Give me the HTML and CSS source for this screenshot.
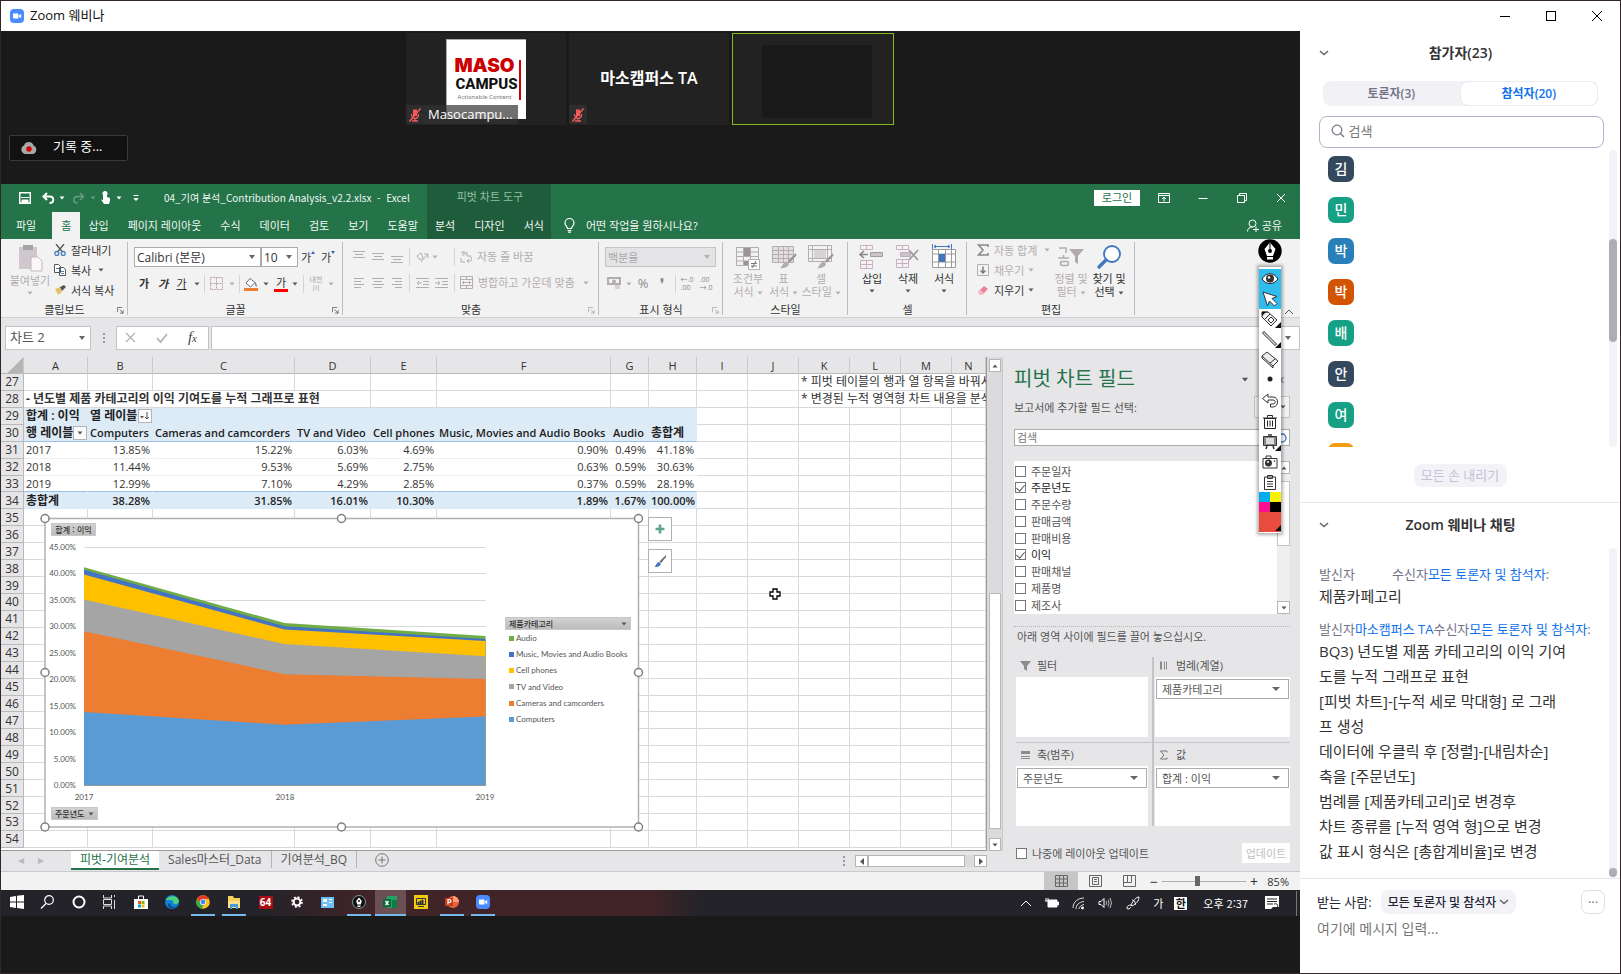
FILE: index.html
```html
<!DOCTYPE html>
<html lang="ko">
<head>
<meta charset="utf-8">
<title>Zoom 웨비나</title>
<link rel="stylesheet" href="styles.css">
</head>
<body>
<svg class="defs" aria-hidden="true">
  <symbol id="tri" viewBox="0 0 6 4"><path d="M0.5 0.5h5L3 3.5z" fill="currentColor"/></symbol>
  <symbol id="launch" viewBox="0 0 8 8"><path d="M0.5 6V0.5H6M3 3l4 4M7 3.5V7H3.5" fill="none" stroke="currentColor"/></symbol>
  <symbol id="chev" viewBox="0 0 10 6"><path d="M1 1l4 3.6L9 1" fill="none" stroke="currentColor" stroke-width="1.5"/></symbol>
  <symbol id="mute" viewBox="0 0 14 14"><path d="M5 1.5h4v6.500H5z" fill="#f25a5a"/><path d="M3.500 6c0 6 7 6 7 0M7 10.500v2.500M4 13h6" fill="none" stroke="#f25a5a" stroke-width="1.400"/><path d="M1.500 13.500L12.500 0.500" stroke="#f25a5a" stroke-width="1.500"/></symbol>
  <symbol id="zoomlogo" viewBox="0 0 14 14"><rect width="14" height="14" rx="4" fill="#4a8cff"/><path d="M3 4.500h4.500a1 1 0 0 1 1 1V9.500H4a1 1 0 0 1-1-1zM9 6.500l2.200-1.600v4.400L9 7.700z" fill="#fff"/></symbol>
  <symbol id="brush" viewBox="0 0 16 16"><path d="M15 1L8 8l1.500 1.500L15.500 3z" fill="#9a9296"/><path d="M7 8.500l2 2c-1 3-4 4-8 4 2-1.500 2.500-5.500 6-6z" fill="#b3abaf"/></symbol>
</svg>
<div class="window">
  <header class="titlebar">
    <svg class="i14"><use href="#zoomlogo"/></svg>
    <h1>Zoom 웨비나</h1>
    <div class="wctl">
      <button aria-label="최소화"><svg width="12" height="12"><path d="M1 6.500h10" stroke="#000"/></svg></button>
      <button aria-label="최대화"><svg width="12" height="12"><rect x="1.500" y="1.500" width="9" height="9" fill="none" stroke="#000"/></svg></button>
      <button aria-label="닫기"><svg width="12" height="12"><path d="M1 1l10 10M11 1L1 11" stroke="#000" fill="none"/></svg></button>
    </div>
  </header>
  <div class="body">
  <main class="stage">
    <section class="videos">
      <div class="tiles">
        <div class="tile">
          <div class="logo"><div class="lt"><b class="l1">MASO</b><b class="l2">CAMPUS</b><span>Actionable Content</span></div><i></i></div>
          <div class="tag wide"><svg class="i14"><use href="#mute"/></svg><span>Masocampu...</span></div>
        </div>
        <div class="tile"><strong>마소캠퍼스 TA</strong><div class="tag"><svg class="i14"><use href="#mute"/></svg></div></div>
        <div class="tile active"><div class="cam"></div></div>
      </div>
      <div class="rec"><svg width="18" height="14"><path d="M5 13a4.500 4.500 0 0 1-1-8.500 5 5 0 0 1 9.500 0A4.500 4.500 0 0 1 13 13z" fill="#a8a8a8"/><circle cx="9" cy="8" r="2.700" fill="#d00000"/></svg><span>기록 중...</span></div>
    </section>

    <section class="excel">
      <header class="xhead">
        <div class="xleft">
          <div class="qat">
            <svg width="12" height="12"><path d="M0.750 0.750h10.500v10.500H0.750z" fill="none" stroke="#fff" stroke-width="1.500"/><path d="M2 5.500h8M3 12V8h6v4z" stroke="#fff" fill="#fff"/></svg>
            <svg width="13" height="12"><path d="M5 1L1.500 4.500 5 8M2 4.500h5.500c5 0 5 6.500 0 6.500" fill="none" stroke="#fff" stroke-width="2"/></svg>
            <svg class="tri"><use href="#tri"/></svg>
            <svg class="dim" width="13" height="12"><path d="M8 1l3.500 3.500L8 8M11 4.500H5.500c-5 0-5 6.500 0 6.500" fill="none" stroke="#fff" stroke-width="1.500"/></svg>
            <svg class="tri dim"><use href="#tri"/></svg>
            <svg width="11" height="13"><path d="M3 4a2.500 2.500 0 1 1 4 0v2l3 1v3l-1 3H4L1 8.500l2 0.500z" fill="#fff"/></svg>
            <svg class="tri"><use href="#tri"/></svg>
            <svg width="6" height="8"><path d="M0.500 1.500h5M1 4.500h4L3 6.500z" stroke="#fff" fill="#fff"/></svg>
          </div>
          <span class="fname">04_기여 분석_Contribution Analysis_v2.2.xlsx &nbsp;- &nbsp;Excel</span>
          <nav class="tabs">
            <a href="#" class="file">파일</a><a href="#" class="on">홈</a><a href="#">삽입</a><a href="#">페이지 레이아웃</a><a href="#">수식</a><a href="#">데이터</a><a href="#">검토</a><a href="#">보기</a><a href="#">도움말</a>
          </nav>
        </div>
        <div class="ctx"><span>피벗 차트 도구</span><nav class="tabs"><a href="#">분석</a><a href="#">디자인</a><a href="#">서식</a></nav></div>
        <div class="tell"><svg width="11" height="15"><path d="M3.500 10.500C3.500 8.500 1 8 1 5a4.500 4.500 0 0 1 9 0c0 3-2.500 3.500-2.500 5.500zM3.500 12.500h4M4 14.200h3" fill="none" stroke="#fff" stroke-width="1.200"/></svg><span>어떤 작업을 원하시나요?</span></div>
        <div class="xright">
          <div class="xctl">
            <button class="login">로그인</button>
            <button aria-label="리본 표시"><svg width="12" height="10"><path d="M0.500 0.500h11v9H0.500zM0.500 2.500h11M6 8.500V4.500M4 6l2-2 2 2" fill="none" stroke="#fff"/></svg></button>
            <button aria-label="최소화"><svg width="10" height="10"><path d="M0.500 5.500h9" stroke="#fff"/></svg></button>
            <button aria-label="복원"><svg width="10" height="10"><path d="M0.500 2.500h7v7h-7zM2.500 2.500v-2h7v7h-2" fill="none" stroke="#fff"/></svg></button>
            <button aria-label="닫기"><svg width="10" height="10"><path d="M1 1l8 8M9 1L1 9" stroke="#fff" fill="none"/></svg></button>
          </div>
          <a href="#" class="share"><svg width="12" height="13"><circle cx="5.500" cy="4.500" r="3.500" fill="none" stroke="#fff"/><path d="M0.500 12.500c0-3 2-4.500 5-4.500M6 10.500h6M9 7.500v5.500" fill="none" stroke="#fff"/></svg>공유</a>
        </div>
      </header>

      <div class="ribbon">
        <section class="grp g-clip">
          <div class="cnt">
            <button class="big off"><svg width="26" height="28"><path d="M2 3h18v22H2z" fill="#cfc8cc"/><path d="M6 1h10v5H6z" fill="#a9a2a6"/><path d="M14 13h7l4 4v10H14z" fill="#fbf6fa" stroke="#c3b9c0"/></svg><span>붙여넣기</span><svg class="tri"><use href="#tri"/></svg></button>
            <div class="stack">
              <button><svg width="12" height="12"><path d="M2 0l6.500 8M10 0L3.500 8" stroke="#555" stroke-width="1.300"/><circle cx="2.800" cy="9.500" r="2" fill="none" stroke="#4a7ebb" stroke-width="1.300"/><circle cx="9.200" cy="9.500" r="2" fill="none" stroke="#4a7ebb" stroke-width="1.300"/></svg>잘라내기</button>
              <button><svg width="12" height="12"><path d="M0.500 0.500h4l2 2v6h-6zM5.500 3.500h4l2 2v6h-6z" fill="#fff" stroke="#555"/><path d="M2 4.500h3M7 7.500h3M7 9.500h3" stroke="#4a7ebb"/></svg>복사 <svg class="tri"><use href="#tri"/></svg></button>
              <button><svg width="12" height="12"><path d="M1 5l5-2 2 5-4 3z" fill="#e6c36a"/><path d="M6 3l2 4 4-4-2-2z" fill="#555"/></svg>서식 복사</button>
            </div>
          </div>
          <footer>클립보드<svg class="lch"><use href="#launch"/></svg></footer>
        </section>
        <section class="grp g-font">
          <div class="cnt col">
            <div class="row">
              <label class="sel fontsel"><select aria-label="글꼴"><option>Calibri (본문)</option></select></label>
              <label class="sel sizesel"><select aria-label="글꼴 크기"><option>10</option></select></label>
              <button class="b20">가<svg width="4" height="3"><path d="M0 3h4L2 0z" fill="#3f62bf"/></svg></button><button class="b20">가<svg width="4" height="3"><path d="M0 0h4L2 3z" fill="#3f62bf"/></svg></button>
            </div>
            <div class="frow">
              <button><b>가</b></button><button><b><i>가</i></b></button><button><u>가</u></button><svg class="tri"><use href="#tri"/></svg><i class="sep"></i>
              <svg class="off" width="13" height="13"><path d="M0.500 0.500h12v12H0.500zM6.500 0.500v12M0.500 6.500h12" fill="none" stroke="#b99fb0" stroke-dasharray="2 1"/></svg><svg class="tri off"><use href="#tri"/></svg><i class="sep"></i>
              <svg width="15" height="14"><path d="M6 1.500l5 4-4.500 4.500-4.500-4z" fill="#fff" stroke="#667"/><path d="M11 5c2 2 2 4 1.500 5-1.500-1-1.500-3-1.500-5z" fill="#4a7ebb"/><rect y="11" width="14" height="3" fill="#ed7d31"/></svg><svg class="tri"><use href="#tri"/></svg>
              <button class="fcol">가</button><svg class="tri"><use href="#tri"/></svg><i class="sep"></i>
              <button class="ruby">내천<br>川</button><svg class="tri off"><use href="#tri"/></svg>
            </div>
          </div>
          <footer>글꼴<svg class="lch"><use href="#launch"/></svg></footer>
        </section>
        <section class="grp g-align">
          <div class="agrid off">
            <svg width="12" height="12"><path d="M0 0.500h12M2 3.500h8M0 6.500h12" stroke="currentColor"/></svg>
            <svg width="12" height="12"><path d="M0 2.500h12M2 5.500h8M0 8.500h12" stroke="currentColor"/></svg>
            <svg width="12" height="12"><path d="M0 5.500h12M2 8.500h8M0 11.500h12" stroke="currentColor"/></svg>
            <i class="sep"></i>
            <svg width="14" height="14"><path d="M2 6l4-3 2 5-3 2zM6 12L13 4M13 8V4H9" fill="none" stroke="currentColor"/></svg>
            <svg class="tri"><use href="#tri"/></svg><i class="sep"></i>
            <button><svg width="12" height="12"><path d="M1 1h4v3M3 1v4M7 1v4h4M1 7v4h4M7 10h3a2 2 0 0 0 0-4M9 8l-2 2 2 2" fill="none" stroke="currentColor"/></svg>자동 줄 바꿈</button>
            <svg width="10" height="12"><path d="M0 1.500h10M0 4.500h7M0 7.500h10M0 10.500h7" stroke="currentColor"/></svg>
            <svg width="12" height="12"><path d="M0 1.500h12M2 4.500h8M0 7.500h12M2 10.500h8" stroke="currentColor"/></svg>
            <svg width="10" height="12"><path d="M0 1.500h10M3 4.500h7M0 7.500h10M3 10.500h7" stroke="currentColor"/></svg>
            <i class="sep"></i>
            <svg width="13" height="12"><path d="M0 1.500h13M7 4.500h6M7 7.500h6M0 10.500h13M6 6H1M3 4L1 6l2 2" fill="none" stroke="currentColor"/></svg>
            <svg width="13" height="12"><path d="M0 1.500h13M7 4.500h6M7 7.500h6M0 10.500h13M0 6h5M3 4l2 2-2 2" fill="none" stroke="currentColor"/></svg>
            <i class="sep"></i>
            <button><svg width="13" height="13"><path d="M0.500 0.500h12v12H0.500zM0.500 3.500h12M0.500 9.500h12M6.500 0v3M6.500 10v3M2.500 6.500h8M4 5L2.500 6.500 4 8M9 5l1.500 1.500L9 8" fill="none" stroke="currentColor"/></svg>병합하고 가운데 맞춤<svg class="tri far"><use href="#tri"/></svg></button>
          </div>
          <footer>맞춤<svg class="lch off"><use href="#launch"/></svg></footer>
        </section>
        <section class="grp g-num">
          <div class="cnt col">
            <label class="sel numsel"><select aria-label="표시 형식" disabled><option>백분율</option></select></label>
            <div class="nrow off">
              <svg width="14" height="13"><path d="M1 1h12v6H1z" fill="none" stroke="currentColor" stroke-width="2"/><circle cx="7" cy="4.500" r="2" fill="currentColor"/><path d="M8 8h5v4H8z" fill="#dccfd8"/></svg><svg class="tri"><use href="#tri"/></svg><span>%</span><b>❜</b><i class="sep"></i><small>←.0<br>.00</small><small>.00<br>→.0</small>
            </div>
          </div>
          <footer>표시 형식<svg class="lch off"><use href="#launch"/></svg></footer>
        </section>
        <section class="grp g-style">
          <div class="cnt off">
            <button class="big"><svg width="26" height="26"><path d="M1.500 3.500h22v18h-22zM1.500 8h22M1.500 12.500h22M1.500 17h22M8.500 3v18M15.500 3v18" fill="none" stroke="currentColor"/><path d="M9 4h6v8H9zM9 17h4v4H9z" fill="#9b9397"/><path d="M13.500 15.500h11v10h-11z" fill="#fff" stroke="currentColor"/><path d="M16 19.500h6M16 22h6M21 17l-4 7" stroke="#777"/></svg><span>조건부<br>서식 <svg class="tri"><use href="#tri"/></svg></span></button>
            <button class="big"><svg width="26" height="26"><path d="M1.500 2.500h21v16h-21zM1.500 6.500h21M1.500 10.500h21M1.500 14.500h21M7.500 2v16M12.500 2v16M17.500 2v16" fill="#e4dde1" stroke="currentColor"/><use href="#brush" x="8" y="8" width="18" height="18"/></svg><span>표<br>서식 <svg class="tri"><use href="#tri"/></svg></span></button>
            <button class="big"><svg width="26" height="26"><path d="M0.500 1.500h23v16H0.500zM0.500 5.500h23M0.500 14.500h23M4.500 1v16M19.500 1v16" fill="none" stroke="currentColor"/><path d="M6 6h12v8H6z" fill="#d8d1d5"/><use href="#brush" x="8" y="8" width="18" height="18"/></svg><span>셀<br>스타일 <svg class="tri"><use href="#tri"/></svg></span></button>
          </div>
          <footer>스타일</footer>
        </section>
        <section class="grp g-cell">
          <div class="cnt">
            <button class="big"><svg width="26" height="26"><path d="M1.500 1.500h12v4h-12zM7.500 1v4M1.500 16.500h12v8h-12zM7.500 16v8M1.500 20.500h12" fill="#f8f0f6" stroke="#c5b3bf"/><path d="M11.500 8.500h12v4h-12z" fill="#ccc4c8" stroke="#a39ba0"/><path d="M9 10.500H1M5 7l-4 3.500L5 14" fill="none" stroke="#8d868a" stroke-width="1.600"/></svg><span>삽입</span><svg class="tri"><use href="#tri"/></svg></button>
            <button class="big"><svg width="26" height="26"><path d="M1.500 1.500h12v4h-12zM7.500 1v4M1.500 15.500h12v8h-12zM7.500 15v8M1.500 19.500h12" fill="#f8f0f6" stroke="#c5b3bf"/><path d="M5.500 8.500h10v4h-10z" fill="#ccc4c8" stroke="#b9b1b5"/><path d="M14 6l9 10M23 6l-9 10" fill="none" stroke="#a39ba0" stroke-width="1.800"/></svg><span>삭제</span><svg class="tri"><use href="#tri"/></svg></button>
            <button class="big"><svg width="26" height="26"><path d="M1.500 5.500h23v18h-23zM1.500 10h23M1.500 18h23M7.500 5v18M14.500 5v18M20.500 5v18" fill="#fff" stroke="#9a9a9a"/><path d="M8 10h6v8H8z" fill="#3f76bf"/><path d="M3 2.500h16M5 1L3 2.500 5 4M17 1l2 1.500L17 4M1.500 0v5M20.500 0v5" fill="none" stroke="#3f76bf"/></svg><span>서식</span><svg class="tri"><use href="#tri"/></svg></button>
          </div>
          <footer>셀</footer>
        </section>
        <section class="grp g-edit">
          <div class="cnt">
            <div class="stack">
              <button class="off"><svg width="12" height="12"><path d="M11 3V1H1.500L6 6l-4.500 5H11V9" fill="none" stroke="#8d868a" stroke-width="1.600"/></svg>자동 합계<svg class="tri"><use href="#tri"/></svg></button>
              <button class="off"><svg width="12" height="12"><path d="M0.500 0.500h11v11H0.500z" fill="none" stroke="currentColor"/><path d="M6 2.500V9M3.500 6.500L6 9l2.500-2.500" fill="none" stroke="#777" stroke-width="1.400"/></svg>채우기<svg class="tri near"><use href="#tri"/></svg></button>
              <button><svg width="12" height="12"><path d="M1 8l6-6 4 3-6 6H3z" fill="#e98199"/><path d="M1 8l2-2 4 3-2 2H3z" fill="#f4b9c6"/></svg>지우기<svg class="tri near"><use href="#tri"/></svg></button>
            </div>
            <button class="big off"><svg width="28" height="26"><path d="M2 4h7v5M1 14h11M3.500 17.500h6a2 2 0 0 1 0 4h-4a2 2 0 0 1 0-4M6.500 11v3" fill="none" stroke="currentColor" stroke-width="1.600"/><path d="M12 5h15l-6 7v8l-3-2v-6z" fill="#b0a9ad"/></svg><span>정렬 및<br>필터 <svg class="tri"><use href="#tri"/></svg></span></button>
            <button class="big"><svg width="26" height="26"><circle cx="16" cy="10" r="8" fill="#fff" stroke="#3f76bf" stroke-width="1.800"/><path d="M10 16l-7 7" stroke="#3f76bf" stroke-width="3.400" stroke-linecap="round"/></svg><span>찾기 및<br>선택 <svg class="tri"><use href="#tri"/></svg></span></button>
          </div>
          <footer>편집</footer>
        </section>
        <button class="fold" aria-label="리본 축소"><svg width="10" height="6"><path d="M1 5l4-4 4 4" fill="none" stroke="#555"/></svg></button>
      </div>

      <div class="fbar">
        <label class="sel namebox"><input aria-label="이름 상자" value="차트 2"></label>
        <span class="grip"></span>
        <div class="fbtns"><svg width="12" height="12"><path d="M1 1l9 9M10 1l-9 9" stroke="#b5b5b5" stroke-width="1.400"/></svg><svg width="12" height="12"><path d="M1 6l3.500 4L11 2" fill="none" stroke="#b5b5b5" stroke-width="1.800"/></svg><em>f<small>x</small></em></div>
        <label class="sel formula"><input aria-label="수식 입력줄"></label>
      </div>

      <div class="work">
        <div class="gridside">
          <div class="gridwrap">
            <div class="sheet">
              <table>
                <colgroup><col class="c0"><col class="c64"><col class="c65"><col class="cC"><col class="c75"><col class="c66"><col class="cF"><col class="c38"><col class="c48"><col class="c51"><col class="c51"><col class="c51"><col class="c51"><col class="c51"><col></colgroup>
                <thead><tr><th class="corner"></th><th>A</th><th>B</th><th>C</th><th>D</th><th>E</th><th>F</th><th>G</th><th>H</th><th>I</th><th>J</th><th>K</th><th>L</th><th>M</th><th>N</th></tr></thead>
                <tbody>
                <tr><th>27<td><td><td><td><td> <td><td><td><td><td> <td colspan="4" class="t k">* 피벗 테이블의 행과 열 항목을 바꿔서
                <tr><th>28<td colspan="4" class="t k"><b>- 년도별 제품 카테고리의 이익 기여도를 누적 그래프로 표현</b><td><td><td><td><td><td><td colspan="4" class="t k">* 변경된 누적 영역형 차트 내용을 분석
                <tr class="p"><th>29<td class="t k">합계 : 이익<td class="t k">열 레이블<button class="dd" aria-label="정렬"><svg width="10" height="8"><path d="M0 4h4L2 6.500z" fill="#555"/><path d="M7 0v7M5 5l2 2 2-2" fill="none" stroke="#555"/></svg></button><td><td><td><td><td><td><td class="n"><td class="n"><td class="n"><td class="n"><td class="n"><td class="n">
                <tr class="p u"><th>30<td class="t k">행 레이블<button class="dd" aria-label="필터"><svg class="tri"><use href="#tri"/></svg></button><td class="t">Computers<td class="t">Cameras and camcorders<td class="t">TV and Video<td class="t">Cell phones<td class="t">Music, Movies and Audio Books<td class="t">Audio<td class="t k">총합계<td class="n"><td class="n"><td class="n"><td class="n"><td class="n"><td class="n">
                <tr class="d"><th>31<td class="t">2017<td>13.85%<td>15.22%<td>6.03%<td>4.69%<td>0.90%<td>0.49%<td>41.18%<td class="n"><td class="n"><td class="n"><td class="n"><td class="n"><td class="n">
                <tr class="d"><th>32<td class="t">2018<td>11.44%<td>9.53%<td>5.69%<td>2.75%<td>0.63%<td>0.59%<td>30.63%<td class="n"><td class="n"><td class="n"><td class="n"><td class="n"><td class="n">
                <tr class="d u"><th>33<td class="t">2019<td>12.99%<td>7.10%<td>4.29%<td>2.85%<td>0.37%<td>0.59%<td>28.19%<td class="n"><td class="n"><td class="n"><td class="n"><td class="n"><td class="n">
                <tr class="p"><th>34<td class="t k">총합계<td>38.28%<td>31.85%<td>16.01%<td>10.30%<td>1.89%<td>1.67%<td>100.00%<td class="n"><td class="n"><td class="n"><td class="n"><td class="n"><td class="n">
                <tr><th>35<td><td><td><td><td><td><td><td><td><td><td><td><td><td>
                <tr><th>36<td><td><td><td><td><td><td><td><td><td><td><td><td><td>
                <tr><th>37<td><td><td><td><td><td><td><td><td><td><td><td><td><td>
                <tr><th>38<td><td><td><td><td><td><td><td><td><td><td><td><td><td>
                <tr><th>39<td><td><td><td><td><td><td><td><td><td><td><td><td><td>
                <tr><th>40<td><td><td><td><td><td><td><td><td><td><td><td><td><td>
                <tr><th>41<td><td><td><td><td><td><td><td><td><td><td><td><td><td>
                <tr><th>42<td><td><td><td><td><td><td><td><td><td><td><td><td><td>
                <tr><th>43<td><td><td><td><td><td><td><td><td><td><td><td><td><td>
                <tr><th>44<td><td><td><td><td><td><td><td><td><td><td><td><td><td>
                <tr><th>45<td><td><td><td><td><td><td><td><td><td><td><td><td><td>
                <tr><th>46<td><td><td><td><td><td><td><td><td><td><td><td><td><td>
                <tr><th>47<td><td><td><td><td><td><td><td><td><td><td><td><td><td>
                <tr><th>48<td><td><td><td><td><td><td><td><td><td><td><td><td><td>
                <tr><th>49<td><td><td><td><td><td><td><td><td><td><td><td><td><td>
                <tr><th>50<td><td><td><td><td><td><td><td><td><td><td><td><td><td>
                <tr><th>51<td><td><td><td><td><td><td><td><td><td><td><td><td><td>
                <tr><th>52<td><td><td><td><td><td><td><td><td><td><td><td><td><td>
                <tr><th>53<td><td><td><td><td><td><td><td><td><td><td><td><td><td>
                <tr><th>54<td><td><td><td><td><td><td><td><td><td><td><td><td><td>
                </tbody>
              </table>
              <div class="chart">
                <svg width="608" height="324" role="img" aria-label="누적 영역형 차트">
                  <rect x="7" y="7.500" width="593.500" height="308.500" fill="#fff" stroke="#b1b1b1" stroke-width="1.500"/>
                  <path d="M46 36.500h402M46 62.500h402M46 89.500h402M46 115.500h402M46 142.500h402M46 168.500h402M46 195.500h402M46 221.500h402M46 248.500h402M46 274.500h402" stroke="#d9d9d9"/>
                  <path d="M46 56.200L246.500 112.100 447.500 125V274.500H46z" fill="#70ad47"/>
                  <path d="M46 58.800L246.500 115.200 447.500 128.100V274.500H46z" fill="#4472c4"/>
                  <path d="M46 63.600L246.500 118.500 447.500 130.100V274.500H46z" fill="#ffc000"/>
                  <path d="M46 88.400L246.500 133.100 447.500 145.200V274.500H46z" fill="#a5a5a5"/>
                  <path d="M46 120.300L246.500 163.200 447.500 167.900V274.500H46z" fill="#ed7d31"/>
                  <path d="M46 200.900L246.500 213.700 447.500 205.500V274.500H46z" fill="#5b9bd5"/>
                  <g class="ylab"><text x="38" y="39">45.00%</text><text x="38" y="65">40.00%</text><text x="38" y="92">35.00%</text><text x="38" y="118">30.00%</text><text x="38" y="145">25.00%</text><text x="38" y="171">20.00%</text><text x="38" y="198">15.00%</text><text x="38" y="224">10.00%</text><text x="38" y="251">5.00%</text><text x="38" y="277">0.00%</text></g>
                  <g class="xlab"><text x="46" y="289">2017</text><text x="247" y="289">2018</text><text x="447" y="289">2019</text></g>
                  <g class="leg"><rect x="471" y="125" width="5" height="5" fill="#70ad47"/><text x="478" y="130">Audio</text><rect x="471" y="141" width="5" height="5" fill="#4472c4"/><text x="478" y="146">Music, Movies and Audio Books</text><rect x="471" y="157" width="5" height="5" fill="#ffc000"/><text x="478" y="162">Cell phones</text><rect x="471" y="173" width="5" height="5" fill="#a5a5a5"/><text x="478" y="179">TV and Video</text><rect x="471" y="190" width="5" height="5" fill="#ed7d31"/><text x="478" y="195">Cameras and camcorders</text><rect x="471" y="206" width="5" height="5" fill="#5b9bd5"/><text x="478" y="211">Computers</text></g>
                  <g fill="#fff" stroke="#7f7f7f" stroke-width="1.500"><circle cx="7" cy="7.500" r="4"/><circle cx="303.500" cy="7.500" r="4"/><circle cx="600.500" cy="7.500" r="4"/><circle cx="7" cy="161.500" r="4"/><circle cx="600.500" cy="161.500" r="4"/><circle cx="7" cy="316" r="4"/><circle cx="303.500" cy="316" r="4"/><circle cx="600.500" cy="316" r="4"/></g>
                </svg>
                <button class="cf cf1">합계 : 이익</button>
                <button class="cf cf2">제품카테고리<svg class="tri"><use href="#tri"/></svg></button>
                <button class="cf cf3">주문년도<svg class="tri"><use href="#tri"/></svg></button>
              </div>
              <div class="cbtns">
                <button aria-label="차트 요소"><svg width="12" height="12"><path d="M6 1.500v9M1.500 6h9" stroke="#5fa58a" stroke-width="2.600"/></svg></button>
                <button aria-label="차트 스타일"><svg width="14" height="14"><path d="M13 1L6.500 7.500 8 9l5-6z" fill="#666"/><path d="M6 8l2 2c-1 2.500-3.500 3-6.500 3 1.500-1 2-4.500 4.500-5z" fill="#3f76bf"/></svg></button>
              </div>
              <svg class="cursor" width="12" height="12"><path d="M4 1h4v3h3v4H8v3H4V8H1V4h3z" fill="#fff" stroke="#000" stroke-width="1.300"/></svg>
            </div>
            <div class="vscroll"><button aria-label="위로"><svg class="tri up"><use href="#tri"/></svg></button><i class="trk"></i><i class="thm"></i><i class="trk2"></i><button aria-label="아래로"><svg class="tri"><use href="#tri"/></svg></button></div>
          </div>
          <div class="sheettabs">
            <span class="nav">◂</span><span class="nav">▸</span>
            <a href="#" class="on">피벗-기여분석</a><a href="#">Sales마스터_Data</a><a href="#">기여분석_BQ</a>
            <button class="add" aria-label="새 시트"><svg width="14" height="14"><circle cx="7" cy="7" r="6.300" fill="none" stroke="#777"/><path d="M7 3.500v7M3.500 7h7" stroke="#777"/></svg></button>
            <span class="grip"></span>
            <div class="hscroll"><button aria-label="왼쪽"><svg width="4" height="7"><path d="M4 0v7L0 3.500z" fill="#555"/></svg></button><i></i><button aria-label="오른쪽"><svg width="4" height="7"><path d="M0 0v7l4-3.500z" fill="#555"/></svg></button></div>
          </div>
        </div>
        <aside class="pane">
          <div class="ptitle"><h2>피벗 차트 필드</h2><svg class="tri"><use href="#tri"/></svg><span>✕</span></div>
          <div class="psub"><span>보고서에 추가할 필드 선택:</span><button aria-label="도구"><svg class="tri"><use href="#tri"/></svg></button></div>
          <div class="psearch"><input placeholder="검색" aria-label="필드 검색"><svg width="12" height="12"><circle cx="5" cy="6" r="4" fill="none" stroke="#3f76bf" stroke-width="1.300"/></svg></div>
          <div class="plist">
            <div class="items">
              <label><input type="checkbox">주문일자</label><label class="ck"><input type="checkbox" checked>주문년도</label><label><input type="checkbox">주문수량</label><label><input type="checkbox">판매금액</label><label><input type="checkbox">판매비용</label><label class="ck"><input type="checkbox" checked>이익</label><label><input type="checkbox">판매채널</label><label><input type="checkbox">제품명</label><label><input type="checkbox">제조사</label>
            </div>
            <div class="pscroll"><button aria-label="위로"><svg class="tri up"><use href="#tri"/></svg></button><i></i><button class="dn" aria-label="아래로"><svg class="tri"><use href="#tri"/></svg></button></div>
          </div>
          <p class="phint">아래 영역 사이에 필드를 끌어 놓으십시오.</p>
          <div class="areas">
            <section><h3><svg width="11" height="10"><path d="M0 0h11L7 5v5L4 8V5z" fill="#8b8b8b"/></svg>필터</h3><div class="box"></div></section>
            <section><h3><svg width="11" height="10"><path d="M1 0.500h2v8H1zM5 0.500h1v8H5zM7 0.500h1v8H7z" fill="#8b8b8b"/></svg>범례(계열)</h3><div class="box"><label class="sel"><select aria-label="범례"><option>제품카테고리</option></select></label></div></section>
            <section><h3><svg width="11" height="10"><path d="M1 1h9v3H1zM1 6h9v1H1zM1 8h9v1H1z" fill="#8b8b8b"/></svg>축(범주)</h3><div class="box"><label class="sel"><select aria-label="축"><option>주문년도</option></select></label></div></section>
            <section><h3><svg width="11" height="10"><path d="M8 2.500V1H1.500L5 5 1.500 9H8V7.500" fill="none" stroke="#777"/></svg>값</h3><div class="box"><label class="sel"><select aria-label="값"><option>합계 : 이익</option></select></label></div></section>
          </div>
          <div class="pfoot"><label><input type="checkbox">나중에 레이아웃 업데이트</label><button disabled>업데이트</button></div>
        </aside>
      </div>

      <div class="status">
        <button class="on" aria-label="기본"><svg width="13" height="12"><path d="M0.500 0.500h12v11H0.500zM0.500 4h12M0.500 8h12M4.500 0v12M8.500 0v12" fill="none" stroke="#666"/></svg></button>
        <button aria-label="페이지 레이아웃"><svg width="13" height="12"><path d="M0.500 0.500h12v11H0.500zM3.500 2.500h6v7h-6zM5 4.500h3M5 6.500h3" fill="none" stroke="#666"/></svg></button>
        <button aria-label="페이지 나누기"><svg width="13" height="12"><path d="M0.500 0.500h12v11H0.500zM0.500 7.500h8V0.500M4.500 0v7" fill="none" stroke="#666"/></svg></button>
        <span class="zb">−</span><input type="range" aria-label="확대/축소" min="0" max="100" value="42"><span class="zb">+</span><span class="zp">85%</span>
      </div>

      <div class="taskbar">
        <div class="apps">
          <span><svg width="14" height="14"><path d="M0 2l6-1v5.500H0zM7 0.800L14 0v6.500H7zM0 7.500h6V13l-6-1zM7 7.500h7V14l-7-1z" fill="#fff"/></svg></span>
          <span><svg width="15" height="14"><circle cx="9" cy="5" r="4.300" fill="none" stroke="#fff" stroke-width="1.200"/><path d="M6 8.500L1 13.500" stroke="#fff" stroke-width="1.200"/></svg></span>
          <span><svg width="14" height="14"><circle cx="7" cy="7" r="5.500" fill="none" stroke="#fff" stroke-width="2"/></svg></span>
          <span><svg width="15" height="14"><path d="M1.500 0v3h8V0M1.500 14v-3h8v3M1.500 4.500v5h8v-5zM12.500 0v2M12.500 5v9" fill="none" stroke="#ddd"/></svg></span>
          <span><svg width="14" height="15"><path d="M4.500 4V1h5v3" fill="none" stroke="#fff"/><path d="M0 4h14v10H0z" fill="#fff"/><path d="M4 6h3v3H4z" fill="#f25022"/><path d="M7.500 6h3v3h-3z" fill="#7fba00"/><path d="M4 9.500h3v3H4z" fill="#00a4ef"/><path d="M7.500 9.500h3v3h-3z" fill="#ffb900"/></svg></span>
          <span><svg width="14" height="14"><circle cx="7" cy="7" r="7" fill="#1282d4"/><path d="M1 5C3 0 13 0 14 6c0 3-4 4-6 2 1-1 0-3-2-3-2 0-4 0-5 0z" fill="#4fd07f"/><path d="M5 8c0 4 5 5 7 3-3 5-10 2-9-2z" fill="#0c4f94"/></svg></span>
          <span class="run"><svg width="14" height="14"><circle cx="7" cy="7" r="6.800" fill="#fbc116"/><path d="M1 3.800A6.800 6.800 0 0 1 13 4H7L4.500 8z" fill="#e33b2e"/><path d="M1 3.800L4.500 9 7 10l-1 3.700A6.800 6.800 0 0 1 1 3.800z" fill="#2da94f"/><circle cx="7" cy="7" r="3" fill="#fff"/><circle cx="7" cy="7" r="2.400" fill="#4285f4"/></svg></span>
          <span class="run"><svg width="14" height="13"><path d="M1 0h5l1 2h6v10H1z" fill="#f7cf5b"/><path d="M1 5h12v7H1z" fill="#fbe08a"/><path d="M3 13V8h8v5H9v-2H5v2z" fill="#4a9bdc"/></svg></span>
          <span><b class="n64">64</b></span>
          <span><svg width="12" height="12"><circle cx="6" cy="6" r="3.400" fill="none" stroke="#fff" stroke-width="2"/><circle cx="6" cy="6" r="5" fill="none" stroke="#fff" stroke-width="1.600" stroke-dasharray="2 1.930"/></svg></span>
          <span><svg width="14" height="11"><path d="M0 0h13v11H0z" fill="#6cc0f5"/><path d="M2 2h4v3H2zM8 2h3v1H8zM8 5h3v1H8zM2 7h4v2H2z" fill="#fff"/></svg></span>
          <span class="run"><svg width="14" height="14"><circle cx="7" cy="7" r="6.500" fill="#111" stroke="#7a9c98"/><path d="M7 2.500L9.800 6 8.800 9.500H5.200L4.200 6zM5.500 10.500h3v1.500h-3z" fill="#fff"/><circle cx="7" cy="6" r="1" fill="#111"/></svg></span>
          <span class="run cur"><svg width="14" height="13"><path d="M4 0h10v12H4z" fill="#21a366"/><path d="M9 4h5v8H9z" fill="#107c41"/><path d="M0 3h8v8H0z" fill="#0b6b38"/><path d="M2.500 5l3 4M5.500 5l-3 4" stroke="#fff" stroke-width="1.300"/></svg></span>
          <span><svg width="14" height="14"><path d="M0 0h14v14H0z" fill="#f2c811"/><path d="M2.500 3.500h9v6h-9z" fill="none" stroke="#333"/><path d="M4 9V7h1v2zM6 9V6h1v3zM8 9V5h1v4zM4 11.500h6" fill="#333" stroke="#333"/></svg></span>
          <span class="run"><svg width="14" height="14"><circle cx="8" cy="7" r="6" fill="#e8633a"/><path d="M8 1a6 6 0 0 1 6 6H8z" fill="#ff9a76"/><path d="M0 3h8v8H0z" fill="#c43e1c"/><path d="M3 9.500v-5h1.500a1.300 1.300 0 0 1 0 2.800H3" fill="none" stroke="#fff" stroke-width="1.200"/></svg></span>
          <span class="run"><svg class="i14"><use href="#zoomlogo"/></svg></span>
        </div>
        <div class="tray">
          <svg width="12" height="7"><path d="M1 6l5-5 5 5" fill="none" stroke="#fff"/></svg>
          <svg width="14" height="10"><path d="M3 2h9v7H3zM12.500 4h1v3h-1z" fill="#fff" stroke="#fff"/><path d="M1 0v3M3 0v3M0 3h4" stroke="#fff"/></svg>
          <svg width="13" height="13"><path d="M1 11C1 5 6 1 12 1M4 12c0-4 3-7 8-7.500M7 12c0-2 2-4 5-4.500" fill="none" stroke="#ddd"/><circle cx="10.500" cy="11" r="1.400" fill="#fff"/></svg>
          <svg width="15" height="12"><path d="M1 4.500h2l3-3v9l-3-3H1z" fill="none" stroke="#fff"/><path d="M8 4q1 2 0 4M10 2.500q2 3.500 0 7M12 1q3 5 0 10" fill="none" stroke="#bbb"/></svg>
          <svg width="14" height="14"><path d="M13 1c-3 0-6 4-8 8l1 1c4-2 7-5 7-9zM5 9c-2 0-4 1-4 3s3 1 4-1M6 4c2 0 4 2 3 5" fill="none" stroke="#fff"/></svg>
          <span>가</span><b>한</b><time>오후 2:37</time>
          <svg class="note" width="14" height="14"><path d="M0 0h14v11H8l-2 2H0z" fill="#fff"/><path d="M2 3h10M2 5.500h10M2 8h6" stroke="#222"/><path d="M9 8c4-1 5 2 2 5" fill="none" stroke="#222"/></svg>
        </div>
      </div>

      <div class="pen"><svg width="24" height="24"><circle cx="12" cy="12" r="11.700" fill="#000"/><path d="M12 3.500L17.500 10l-2.500 7H9L6.500 10zM9 18h6v2.500H9z" fill="#fff"/><path d="M12 4v8" stroke="#000"/><circle cx="12" cy="12" r="2" fill="#000"/></svg>
        <div class="tools">
          <button class="hot" aria-label="보기"><svg width="18" height="14"><path d="M1 7c4-7 12-7 16 0-4 6-12 6-16 0z" fill="#fff" stroke="#222"/><circle cx="9" cy="6.500" r="4" fill="#333"/><circle cx="8" cy="5.500" r="1.200" fill="#fff"/></svg></button>
          <button class="hot" aria-label="커서"><svg width="18" height="18"><path d="M2 2l14 4.500-5 2 5 5-2.500 2.500-5-5-2 5z" fill="#fff" stroke="#333"/></svg></button>
          <button class="c" aria-label="펜"><svg width="18" height="18"><path d="M1 2v5l9 9 6-6-9-8zM1 2l6 0M4 9l5-5M7 10l3-3 3 3-3 3z" fill="#eee" stroke="#333"/><path d="M1 2h4L1 6z" fill="#111"/></svg></button>
          <button class="c" aria-label="선"><svg width="18" height="18"><path d="M2 2l13 13" stroke="#333" stroke-width="3"/><path d="M2.500 2.500l12 12" stroke="#ddd" stroke-width="1.400"/></svg></button>
          <button aria-label="지우개"><svg width="18" height="18"><path d="M1 6l5-4 11 9-5 5zM1 6v2l11 10v-2M9 13l5-4" fill="#eee" stroke="#333"/></svg></button>
          <button aria-label="크기"><svg width="6" height="6"><circle cx="3" cy="3" r="2.500" fill="#222"/></svg></button>
          <button aria-label="실행 취소"><svg width="18" height="16"><path d="M7 1L1.500 5.500 7 10V7h5c3 0 3 4 0 4H9.500v3H12c6 0 6-10 0-10H7z" fill="#fff" stroke="#333"/></svg></button>
          <button aria-label="삭제"><svg width="16" height="16"><path d="M2.500 4.500h11v10h-11zM1 4h14M5.500 3.500v-2h5v2M5.500 6.500v6M8 6.500v6M10.500 6.500v6" fill="none" stroke="#222"/></svg></button>
          <button class="c" aria-label="칠판"><svg width="16" height="16"><path d="M1.500 2.500h13v9h-13z" fill="#888" stroke="#333"/><path d="M4 4h8v6H4z" fill="#ddd"/><path d="M6 1h4M5 12l-1 3M11 12l1 3" stroke="#333" stroke-width="1.500"/></svg></button>
          <button aria-label="캡처"><svg width="16" height="14"><path d="M1 3.500h14v9.500H1zM4 3V1h5v2" fill="#fff" stroke="#333"/><circle cx="6.500" cy="8" r="3.500" fill="#333"/><circle cx="6" cy="7" r="1" fill="#fff"/><circle cx="12.500" cy="6" r="0.800" fill="#333"/></svg></button>
          <button aria-label="클립보드"><svg width="14" height="17"><path d="M1.500 3h11v12.500h-11zM4.500 1.500h5v3h-5zM4 7.500h6M4 10h6M4 12.500h6" fill="#fff" stroke="#333"/></svg></button>
          <div class="sw"><i class="cy"></i><i class="ye"></i><i class="ma"></i><i class="bk"></i></div>
          <button class="red c" aria-label="색"></button>
        </div>
      </div>
    </section>
  </main>

  <aside class="side">
    <section class="people">
      <header><svg class="chev"><use href="#chev"/></svg><h2>참가자(23)</h2></header>
      <div class="seg"><button>토론자(3)</button><button class="on">참석자(20)</button></div>
      <label class="find"><svg width="14" height="14"><circle cx="6" cy="6" r="4.800" fill="none" stroke="#747487" stroke-width="1.200"/><path d="M9.500 9.500L13 13" stroke="#747487" stroke-width="1.200"/></svg><input placeholder="검색" aria-label="검색"></label>
      <div class="plwrap">
        <ul><li class="navy">김</li><li class="teal">민</li><li class="blue">박</li><li class="org">박</li><li class="teal">배</li><li class="navy">안</li><li class="teal">여</li><li class="yel"></li></ul>
        <div class="sb"><i></i></div>
      </div>
      <button class="hands" disabled>모든 손 내리기</button>
    </section>
    <section class="chat">
      <header><svg class="chev"><use href="#chev"/></svg><h2>Zoom 웨비나 채팅</h2></header>
      <div class="log">
        <div class="msgs">
          <p class="from"><span class="who">발신자</span>수신자<a href="#">모든 토론자 및 참석자</a>:</p>
          <p class="msg">제품카페고리</p>
          <p class="from">발신자<a href="#">마소캠퍼스 TA</a>수신자<a href="#">모든 토론자 및 참석자</a>:</p>
          <p class="msg">BQ3) 년도별 제품 카테고리의 이익 기여<br>도를 누적 그래프로 표현<br>[피벗 차트]-[누적 세로 막대형] 로 그래<br>프 생성<br>데이터에 우클릭 후 [정렬]-[내림차순]<br>축을 [주문년도]<br>범례를 [제품카테고리]로 변경후<br>차트 종류를 [누적 영역 형]으로 변경<br>값 표시 형식은 [총합계비율]로 변경</p>
        </div>
        <div class="sb"><i></i></div>
      </div>
      <footer>
        <div class="to"><label for="to">받는 사람:</label><span class="tosel"><select id="to"><option>모든 토론자 및 참석자</option></select><svg class="chev"><use href="#chev"/></svg></span><button aria-label="더 보기">···</button></div>
        <textarea rows="1" placeholder="여기에 메시지 입력..." aria-label="메시지"></textarea>
      </footer>
    </section>
  </aside>
  </div>
</div>
</body>
</html>
```

FILE: styles.css
```css
*{box-sizing:border-box}
body{margin:0;background:#33262b;font:11px/15px "Open Sans","Noto Sans CJK KR",sans-serif;color:#333}
button,input,select,textarea{font:inherit;color:inherit;margin:0;padding:0;border:0;background:none;border-radius:0;outline:0}
button{display:flex;align-items:center;justify-content:center;white-space:nowrap}
a{color:inherit;text-decoration:none}
h1,h2,h3,p,ul{margin:0;padding:0;font-size:inherit;font-weight:inherit;list-style:none}
svg{display:block;flex:none}
.defs{position:absolute;width:0;height:0}
.i14{width:14px;height:14px}
.tri{width:6px;height:4px;color:#555}
.tri.up{transform:rotate(180deg)}
.off,.off button{color:#b3adb0}
.off .tri,.tri.off,.lch.off{color:#b3adb0}
.window{min-height:100vh;padding:1px;display:flex;flex-direction:column}
.titlebar{height:30px;background:#fff;display:flex;align-items:center;padding-left:9px;gap:6px}
.titlebar h1{flex:1;font-size:13px;line-height:20px;color:#111;padding-bottom:2px}
.wctl{display:flex}
.wctl button{width:46px;height:29px}
.body{flex:1;display:flex}
.stage{flex:1;min-width:0;background:#1a1a1a}

.videos{height:153px;position:relative;padding-top:2px}
.tiles{display:flex;justify-content:center;gap:3px;padding-right:1px}
.tile{width:160px;height:92px;background:#222;position:relative;display:flex;align-items:center;justify-content:center}
.tile strong{color:#fff;font-size:16px;line-height:20px;font-weight:600;padding-bottom:2px}
.tile.active{border:1px solid #86b81b;width:162px}
.cam{width:110px;height:73px;margin:4px 0 0 8px;background:#1a1a1a}
.logo{width:80px;height:80px;background:#fff;border-top:1px solid #aaa;border-left:1px solid #aaa;display:flex;justify-content:center;gap:4px;padding-left:2px}
.lt{display:flex;flex-direction:column;width:60px;align-items:center;padding-top:14px}
.lt .l1{font:900 19px/24px "Inter",sans-serif;color:#cb0000;height:21px}
.lt .l2{font:800 15px/18px "Roboto",sans-serif;color:#111;height:17px;width:58px;text-align:center}
.lt span{font:6px/10px "Noto Sans",sans-serif;color:#777;white-space:nowrap}
.logo i{width:2px;height:40px;margin-top:20px;background:#cb0000}
.tag{position:absolute;left:0;bottom:1px;height:19px;padding:0 2px;display:flex;align-items:center;background:rgba(50,50,50,.7)}
.tag.wide{width:112px;gap:6px}
.tag span{color:#fff;font-size:13px}
.rec{position:absolute;left:8px;top:104px;width:119px;height:26px;background:#111;border:1px solid #3a3a3a;border-radius:2px;display:flex;align-items:center;padding-left:10px;gap:15px;color:#fff;font-size:13px}
.rec span{padding-bottom:3px}

.excel{position:relative;background:#e6e6e8}
.xhead{height:55px;background:#257349;color:#f1f7f3;display:flex}
.xleft{width:426px;display:grid;grid-template:27px 28px/163px 1fr}
.qat{display:grid;grid-template-columns:23px 24px 4px 28px 2px 22px 6px 28px;align-items:center;justify-items:center;padding-left:12px}
.qat .tri{color:#fff}
.qat .dim,.dim{opacity:.3}
.fname{align-self:center;white-space:nowrap;font-size:10px;font-family:"Noto Sans CJK KR",sans-serif}
.tabs{display:flex;gap:1px;grid-column:1/3;align-items:stretch;padding:1px 0 0 6px}
.tabs a{padding:0 9px;line-height:28px;height:27px;white-space:nowrap}
.tabs .file{margin-right:6px}
.tabs .on{background:#f2f2f2;color:#257349;margin-right:-2px}
.ctx{width:124px;background:#1f5c3b;display:grid;grid-template-rows:27px 28px}
.ctx span{text-align:center;line-height:26px;color:#8fc0a3}
.ctx .tabs{padding:1px 0 0;margin-left:-1px;grid-column:1}
.tell{display:flex;align-items:center;gap:11px;padding:27px 0 0 13px}
.xright{margin-left:auto;display:flex;flex-direction:column;align-items:flex-end}
.xctl{display:flex;height:27px;align-items:center}
.xctl button{width:39px;height:27px}
.xctl .login{width:46px;height:16px;background:#fff;color:#257349;margin-right:4px}
.share{display:flex;align-items:center;gap:3px;height:30px;padding-right:18px}

.ribbon{height:79px;background:#f2f2f2;border-bottom:1px solid #d2d2d4;display:flex;padding-top:1px}
.grp{display:flex;flex-direction:column;position:relative;height:78px;padding-bottom:1px}
.grp::after{content:"";position:absolute;right:0;top:2px;bottom:3px;width:1px;background:#bdbdc0}
.grp footer{margin-top:auto;height:14px;display:flex;justify-content:center;align-items:center;position:relative;line-height:14px}
.lch{position:absolute;right:4px;top:4px;width:7px;height:7px;color:#666}
.cnt{display:flex}
.cnt.col{flex-direction:column;gap:7px;padding:7px 0 0 6px}
.row{display:flex;align-items:center}
.big{flex-direction:column;justify-content:flex-start;padding-top:4px;height:60px}
.big span{line-height:13px;margin-top:2px}
.big>.tri{margin-top:4px}
.big span .tri{display:inline-block;vertical-align:middle}
.stack{display:flex;flex-direction:column}
.stack button{height:20px;justify-content:flex-start;gap:5px}
.stack .tri{margin-left:2px}
.g-clip{width:127px}
.g-clip .big{width:48px;margin-left:5px}
.g-font{width:215px}
.g-align{width:256px}
.g-num{width:124px}
.g-style{width:125px}
.g-style .cnt{padding-left:6px}
.g-style .big:nth-child(1){width:38px}
.g-style .big:nth-child(2){width:33px}
.g-style .big:nth-child(3){width:42px}
.g-cell{width:119px}
.g-cell .cnt{padding-left:6px}
.g-cell .big{width:36px}
.g-edit{width:168px}
.g-edit .stack{width:75px;margin-left:10px}
.g-edit .stack .near{margin-left:-1px}
.g-edit .big{width:38px}
.sel{position:relative;display:flex;background:#fff;border:1px solid #ababab}
.sel::after{content:"";position:absolute;right:5px;top:50%;margin-top:-2px;border:3px solid transparent;border-top:4px solid #666;border-bottom:0;pointer-events:none}
.sel select,.sel input{appearance:none;width:100%;padding:0 2px}
.fontsel{width:127px;height:20px}
.sizesel{width:37px;height:20px}
.fontsel select,.sizesel select{font-size:12px}
.numsel{width:111px;height:20px;background:#e4e4e6;border-color:#c4c4c6;color:#a9a9a9}
.numsel select{color:#a9a9a9;opacity:1}
.numsel::after{opacity:.4}
.b20{width:20px;height:18px}
.b20 svg{align-self:flex-start;margin-top:3px}
.sep{width:1px;height:18px;background:#d4d4d6}
.frow,.nrow,.agrid{display:grid;align-items:center;justify-items:center;grid-auto-rows:19px}
.frow{grid-template-columns:20px 18px 19px 11px 4px 20px 11px 4px 21px 8px 22px 6px 10px 16px 14px}
.nrow{grid-template-columns:17px 14px 14px 24px 3px 20px 18px}
.nrow span,.nrow b{font-size:13px;color:#8d868a}
.nrow small{font-size:7px;line-height:8px;color:#8d868a}
.fcol{border-bottom:3px solid #f00;width:14px;height:17px}
.ruby{font-size:7px;line-height:8px;color:#a59da1}
.agrid{grid-template-columns:18px 20px 18px 6px 20px 18px 8px auto;padding:7px 0 0 7px;row-gap:7px;justify-content:start}
.agrid button{justify-self:start;gap:5px;padding-left:2px}
.agrid>.tri{justify-self:start}
.agrid .far{margin-left:3px}
.fold{margin:auto 6px 2px auto}

.fbar{height:39px;display:flex;align-items:center;padding-left:4px;font-size:13px}
.fbar .sel,.fbtns{height:24px;background:#fff;border:1px solid #c4c4c6}
.namebox{width:86px}
.namebox input{padding-left:4px;color:#555}
.grip{width:2px;height:10px;border-left:2px dotted #999;margin:0 12px}
.fbar .grip{margin:0 11px 0 12px}
.fbtns{width:93px;display:flex;align-items:center;justify-content:space-between;padding:0 11px 0 8px}
.fbtns em{font:italic 15px/18px "Liberation Serif",serif;color:#444}
.fbtns small{font-size:11px}
.formula{flex:1;margin-left:2px}
.formula::after{right:8px}

.work{display:flex;height:514px}
.gridside{flex:1;min-width:0;display:flex;flex-direction:column}
.gridwrap{display:flex;height:494px}
.sheet{flex:1;min-width:0;position:relative;overflow:hidden;background:#fff;border-right:1px solid #9b9b9b;border-bottom:1px solid #9b9b9b}
table{table-layout:fixed;width:100%;height:491px;border-collapse:separate;border-spacing:0}
th,td{padding:0 2px;font-weight:400;line-height:15px;white-space:nowrap;border-right:1px solid #d9d9db;border-bottom:1px solid #d9d9db;text-align:right}
tbody th{background:#e6e6e8;border-color:#b9b9bb;text-align:center;font-size:12px}
thead th{background:#e6e6e8;border-color:#b9b9bb;text-align:center;border-right-color:#c9c9cb;height:17px}
thead .corner{background:linear-gradient(135deg,#e6e6e8 60%,#b5b5b5 60%)}
.c0{width:23px}.c64{width:64px}.c65{width:65px}.cC{width:142px}.c75{width:76px}.c66{width:66px}.cF{width:174px}.c38{width:38px}.c48{width:48px}.c51{width:51px}
td.t{text-align:left}
td.k{font-size:12px}
td[colspan]{overflow:visible}
.p td{background:#ddebf7;border-color:#ddebf7;font-weight:600;color:#222}
.p td.n{background:none;border-color:#d9d9db}
.d td{border-color:#fff #fff #f0f0f0}
.d td.n{border-color:#d9d9db}
.u td:not(.n){border-bottom-color:#9bc2e6}
td{position:relative}
.dd{position:absolute;right:0;top:1px;width:14px;height:14px;background:#fafafa;border:1px solid #b5b5b5}
.chart{position:absolute;left:37px;top:154px;width:608px;height:324px}
.chart text{font:8px "Lato",sans-serif;fill:#555}
.chart .ylab text{text-anchor:end}
.chart .xlab text{text-anchor:middle}
.cf{position:absolute;height:13px;font:500 8px/12px "Noto Sans CJK KR",sans-serif;color:#333;background:linear-gradient(#d2d2d2,#bcbcbc);border:1px solid #c8c8c8;padding:0 5px}
.cf1{left:13px;top:12px;width:45px}
.cf2{left:467px;top:106px;width:126px;justify-content:space-between;padding:0 3px}
.cf3{left:13px;top:296px;width:47px;justify-content:space-between;padding:0 3px}
.cbtns{position:absolute;left:647px;top:160px;display:flex;flex-direction:column;gap:8px}
.cbtns button{width:24px;height:24px;background:#fff;border:1px solid #b1b1b1}
.cursor{position:absolute;left:768px;top:231px}
.vscroll{width:16px;padding:2px 1px 0 2px;display:flex;flex-direction:column;background:#dcdadd;border-right:1px solid #c9c9cb}
.vscroll button{height:13px;background:#fff;border:1px solid #b5b5b5}
.trk{height:221px}.thm{flex:1;background:#fff;border:1px solid #b9b9bb}.trk2{height:9px}
.sheettabs{height:20px;display:flex;align-items:flex-start;font-size:12px;line-height:17px;color:#555}
.nav{width:20px;color:#b9b9bb;text-align:center}
.nav:first-child{margin-left:10px}
.nav+a{margin-left:20px}
.sheettabs a{padding:0 9px;border-right:1px solid #b5b5b5;white-space:nowrap}
.sheettabs a.on{background:#fff;color:#257349;border-bottom:2px solid #257349;height:19px;border-right:0}
.add{margin:2px 0 0 18px}
.sheettabs .grip{margin:5px 10px 0 auto}
.hscroll{width:132px;height:12px;margin:4px 16px 0 0;display:flex;background:#dcdadd}
.hscroll button{width:13px;background:#fff;border:1px solid #b5b5b5}
.hscroll i{flex:1;margin-right:9px;background:#fff;border:1px solid #b5b5b5}

.pane{width:297px;padding:7px 10px 0 11px;color:#555;display:flex;flex-direction:column}
.ptitle{display:flex;align-items:center;height:30px}
.ptitle h2{font-size:20px;line-height:30px;color:#257349;flex:1}
.ptitle .tri{width:8px;height:5px;margin-right:27px}
.ptitle span{width:14px;color:#777}
.psub{height:26px;display:flex;align-items:center;justify-content:space-between}
.psub button{width:36px;height:22px;border:1px solid #c4c4c6;background:#f2f2f2;justify-content:flex-end;padding-right:3px}
.psearch{display:flex;height:17px;margin-top:9px;background:#fff;border:1px solid #ababab;align-items:center}
.psearch input{flex:1;padding:0 2px;width:10px}
::placeholder{color:#777;opacity:1}
.plist{display:flex;height:153px;margin-top:15px;background:#fff}
.items{flex:1;display:flex;flex-direction:column;justify-content:space-between;padding:2px 0 1px 1px}
.items label,.pfoot label{display:flex;align-items:center;gap:5px;height:16px}
.items .ck{color:#222}
input[type=checkbox]{appearance:none;width:11px;height:11px;border:1px solid #777;background:#fff;display:flex;justify-content:center}
input[type=checkbox]:checked::after{content:"";width:4px;height:7px;border:solid #555;border-width:0 1px 1px 0;transform:rotate(40deg)}
.pscroll{width:13px;display:flex;flex-direction:column;background:#eee}
.pscroll button{height:13px;border:1px solid #b5b5b5;background:#fff}
.pscroll i{height:65px;margin-top:7px;background:#fff;border:1px solid #c4c4c6}
.pscroll .dn{margin-top:auto}
.phint{margin-top:12px;padding:2px 0 0 3px;border-top:1px dotted #b5b5b5;height:31px}
.areas{display:grid;grid-template-columns:136px 1fr;grid-template-rows:85px 84px;margin-left:2px}
.areas section{padding-right:4px}
.areas section:nth-child(even){border-left:2px solid #c4c4c6;padding:0 0 0 1px}
.areas section:nth-child(n+3){border-top:1px solid #c4c4c6}
.areas h3{display:flex;align-items:center;gap:6px;height:20px;padding:0 0 3px 4px}
.areas section:nth-child(n+3) h3{height:23px;padding-bottom:0}
.box{height:60px;background:#fff;padding:2px 1px}
.box .sel{height:20px}
.box .sel select{padding-left:5px}
.box .sel::after{right:8px;border-width:4px 4px 0}
.pfoot{display:flex;align-items:center;justify-content:space-between;height:20px;margin:17px 0 0 2px}
.pfoot button{width:48px;height:20px;background:#fff;color:#c0c0c0}

.status{height:19px;background:#f2f2f2;border-top:1px solid #c9c9cb;display:flex;justify-content:flex-end;align-items:center;padding-right:11px}
.status button{width:34px;height:18px}
.status .on{background:#c6c5c8}
.zb{width:16px;text-align:center;font-size:14px}
.status input{appearance:none;width:84px;height:10px;background:linear-gradient(#b0b0b0,#b0b0b0) 0 50%/100% 1px no-repeat}
.status input::-webkit-slider-thumb{appearance:none;width:5px;height:10px;background:#666}
.zp{width:27px;text-align:right}
.taskbar{height:26px;background:linear-gradient(90deg,#232329 0 20%,#402428 28% 50%,#232329 54%);display:flex;justify-content:space-between}
.apps{display:flex;width:498px}
.apps span{flex:1;display:flex;align-items:center;justify-content:center;border-bottom:2px solid transparent}
.apps .run{background:linear-gradient(#76b9ed,#76b9ed) 50% 100%/24px 2px no-repeat border-box}
.apps .cur{background:#6a5054;border-bottom-color:#76b9ed}
.n64{background:#a80d14;color:#fff;font-size:10px;line-height:13px;width:14px;text-align:center}
.tray{display:flex;align-items:center;color:#fff;gap:13px;padding-right:3px}
.tray b{background:#fff;color:#111;line-height:13px;width:13px;text-align:center;margin-left:-2px}
.tray time{margin-left:3px;font-family:"Noto Sans CJK KR",sans-serif}
.tray .note{margin:0 4px}
.tray::after{content:"";width:1px;height:25px;background:#777}

.pen{position:absolute;right:18px;top:55px;width:24px}
.tools{width:22px;margin:4px 0 0 1px;padding:2px 0 1px;background:#fff;box-shadow:0 0 3px 2px rgba(0,0,0,.3)}
.tools button{width:22px;height:20px;position:relative}
.tools .hot{background:#2fbdee}
.tools .c::after{content:"";position:absolute;right:0;bottom:1px;border:3px solid #111;border-top-color:transparent;border-left-color:transparent}
.tools button:nth-child(7){height:23px}
.sw{display:grid;grid-template:10px 10px/11px 11px}
.cy{background:#00aeef}.ye{background:#fff200}.ma{background:#ff0f8f}.bk{background:#000}
.tools .red{background:#e74c3c}

.side{width:320px;background:#fff;color:#232333;display:flex;flex-direction:column}
.side header{display:flex;align-items:center;padding:1px 18px 0 19px;height:42px}
.side header h2{flex:1;text-align:center;font-size:14px;line-height:20px;font-weight:600;color:#333;margin-right:10px}
.chev{width:10px;height:6px;color:#666}
.people{height:472px;border-bottom:1px solid #e6e6ee;display:flex;flex-direction:column;align-items:center}
.people header{width:100%}
.seg{display:flex;width:275px;height:25px;margin-top:8px;background:#f1f1f6;border-radius:8px;font-size:12px;font-weight:600;color:#747487}
.seg button{flex:1;border-radius:8px;border:1px solid transparent}
.seg .on{background:#fff;color:#0e71eb;border-color:#eaeaf0}
.find{width:285px;height:32px;margin:10px 0 0 2px;border:1px solid #b3b1cc;border-radius:8px;display:flex;align-items:center;gap:4px;padding:0 0 2px 11px;font-size:13px}
.find input{flex:1}
.plwrap{width:100%;height:299px;display:flex;justify-content:space-between;padding:2px 3px 0 28px}
.plwrap ul{display:flex;flex-direction:column;gap:15px;overflow:hidden;padding-top:6px}
.plwrap li{width:26px;height:26px;flex:none;border-radius:7px;color:#fff;font-size:14px;line-height:25px;text-align:center;font-weight:500}
.navy{background:#34495e}.teal{background:#16a085}.blue{background:#2980b9}.org{background:#d35400}.yel{background:#f39c12}
.sb{width:8px;background:#f2f2f7;border-radius:4px}
.sb i{display:block;width:8px;height:103px;margin-top:89px;border-radius:4px;background:#adadb8}
.hands{width:93px;height:23px;margin-top:17px;border-radius:8px;background:#f2f2f7;color:#c3c1d6;font-size:13px}
.chat{flex:1;display:flex;flex-direction:column}
.log{height:333px;display:flex;justify-content:space-between;padding:3px 3px 0 19px}
.msgs{padding-top:16px;flex:1;white-space:nowrap}
.from{font-size:13px;line-height:20px;color:#747487}
.from a{color:#0e71eb}
.who{display:inline-block;width:73px}
.msg{font-size:15px;line-height:25px;color:#333}
.msg+.from{margin-top:10px}
.log .sb i{height:9px;margin-top:320px}
.chat footer{border-top:1px solid #e6e6ee;padding:11px 15px 0 17px;font-size:13px}
.to{display:flex;align-items:center;gap:9px}
.tosel{position:relative;display:flex;align-items:center;gap:2px;background:#f2f2f7;border-radius:8px;height:24px;padding:0 7px;font-size:12px;font-weight:500}
.tosel select{appearance:none}
.to button{margin-left:auto;width:24px;height:24px;border:1px solid #dedee8;border-radius:7px;color:#747487}
textarea{display:block;width:100%;margin-top:5px;font-size:14px;line-height:20px;resize:none;height:22px}
```
